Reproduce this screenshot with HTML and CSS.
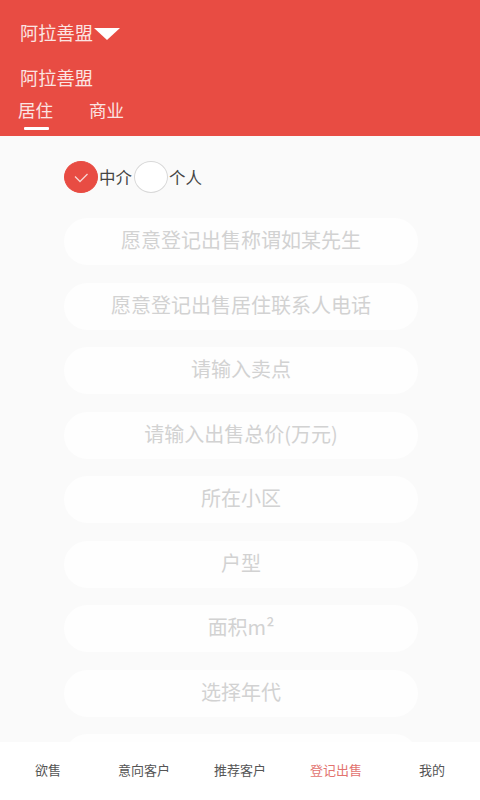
FILE: index.html
```html
<!DOCTYPE html>
<html lang="zh">
<head>
<meta charset="utf-8">
<title>登记出售</title>
<link rel="stylesheet" href="styles.css">
</head>
<body>
<div class="page">
  <header class="header">
    <div class="city"><span>阿拉善盟</span><i class="tri"></i></div>
    <div class="sub">阿拉善盟</div>
    <div class="tabs">
      <div class="tab active">居住</div>
      <div class="tab">商业</div>
    </div>
  </header>
  <main class="main">
    <div class="radios">
      <span class="radio on"><svg width="16" height="12" viewBox="0 0 16 12"><path d="M2 5.500l5 5L14.500 3" fill="none" stroke="#f8d5d2" stroke-width="1.300"/></svg></span>
      <span class="rlabel">中介</span>
      <span class="radio"></span>
      <span class="rlabel">个人</span>
    </div>
    <div class="field">愿意登记出售称谓如某先生</div>
    <div class="field">愿意登记出售居住联系人电话</div>
    <div class="field">请输入卖点</div>
    <div class="field">请输入出售总价(万元)</div>
    <div class="field">所在小区</div>
    <div class="field">户型</div>
    <div class="field">面积m²</div>
    <div class="field">选择年代</div>
    <div class="field"></div>
  </main>
  <nav class="nav">
    <div class="nav-item">欲售</div>
    <div class="nav-item">意向客户</div>
    <div class="nav-item">推荐客户</div>
    <div class="nav-item active">登记出售</div>
    <div class="nav-item">我的</div>
  </nav>
</div>
</body>
</html>
```

FILE: styles.css
```css
* { box-sizing: border-box; }
html, body { margin: 0; padding: 0; }
body { font-family: "Noto Sans CJK SC", "Liberation Sans", sans-serif; }
.page { width: 480px; height: 800px; overflow: hidden; position: relative; background: #fafafa; }
.header { height: 136px; background: #e84c43; color: #fbe4e2; padding: 20px 0 0 20px; }
.city { display: flex; align-items: center; height: 24px; font-size: 18.250px; line-height: 24px; }
.tri { width: 0; height: 0; margin-left: 1px; margin-top: 4px; border-style: solid; border-width: 12px 13px 0; border-color: #fff transparent transparent; }
.sub { margin-top: 21px; font-size: 18.250px; line-height: 24px; height: 24px; }
.tabs { display: flex; gap: 36px; margin-top: 9px; margin-left: -2px; }
.tab { font-size: 17.500px; line-height: 24px; height: 32px; position: relative; width: 35px; text-align: center; white-space: nowrap; }
.tab.active::after { content: ""; position: absolute; left: 6px; bottom: 0; width: 25px; height: 3px; background: #fff; border-radius: 1px; }
.main { padding: 24px 62px 0 64px; }
.radios { display: flex; align-items: center; height: 34px; margin-bottom: 24px; font-size: 16.500px; color: #444; }
.radio { width: 34px; height: 32px; border-radius: 50%; border: 1px solid #d8d8d8; background: #fff; display: flex; align-items: center; justify-content: center; flex: none; }
.radio.on { background: #e84c43; border-color: #e84c43; }
.rlabel { width: 35px; line-height: 30px; white-space: nowrap; margin-left: 1px; }
.field { height: 47px; margin-bottom: 17.500px; border-radius: 24px; background: #fefefe; color: #d2d2d2; font-size: 20px; line-height: 44px; text-align: center; }
.nav { position: absolute; left: 0; right: 0; bottom: 0; height: 58px; background: #fff; display: flex; font-size: 13px; color: #555; }
.nav-item { flex: 1; text-align: center; line-height: 55px; white-space: nowrap; }
.nav-item.active { color: #e2736f; }
```
